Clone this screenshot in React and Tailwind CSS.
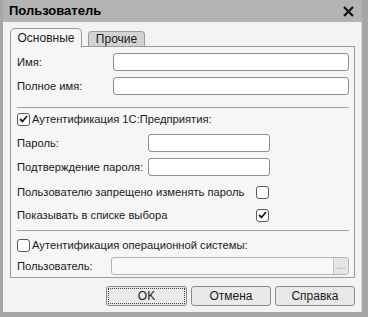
import React from "react";

const font = { fontFamily: '"Liberation Sans", Arial, sans-serif' };

function Box({ checked }) {
  return (
    <div className="w-[13px] h-[13px] rounded-[3px] border border-[#5a5a5a] bg-white flex items-center justify-center shrink-0">
      {checked && (
        <svg width="9" height="8" viewBox="0 0 9 8">
          <path d="M1 4 L3.5 6.5 L8 1" stroke="#1a1a1a" strokeWidth="1.8" fill="none" />
        </svg>
      )}
    </div>
  );
}

function Input({ w }) {
  return <div className={`h-[18px] rounded-[3px] border border-[#8e8e8e] bg-white shrink-0 ${w}`} />;
}

export default function App() {
  return (
    <div
      className="w-[368px] h-[317px] bg-[#a6a6a6] flex flex-col pl-[3px] pr-[6px] pb-[5px] text-[11.2px] text-[#1a1a1a] whitespace-nowrap"
      style={font}
    >
      <div className="h-[22px] shrink-0 flex items-center justify-between pl-[6px] pr-[8px] bg-[#b3b3b3]">
        <span className="font-bold text-[13px] text-black">Пользователь</span>
        <svg width="11" height="11" viewBox="0 0 11 11">
          <path d="M1 1 L10 10 M10 1 L1 10" stroke="#111" strokeWidth="2.2" />
        </svg>
      </div>
      <div className="flex-1 bg-[#f3f3f3] flex flex-col pl-[7px] pr-[6px] pt-[6px] border-r border-[#dcdcdc]">
        <div className="flex items-end h-[18px] gap-[6px]">
          <div className="w-[72px] h-[19px] -mb-px z-10 border border-[#9a9a9a] border-b-0 rounded-t-[5px] bg-[#f6f6f6] flex items-center justify-center text-[12px]">
            Основные
          </div>
          <div className="w-[57px] h-[15px] border border-[#9a9a9a] border-b-0 rounded-t-[4px] bg-[#d3d3d3] flex items-center justify-center text-[12px]">
            Прочие
          </div>
        </div>
        <div className="h-[232px] border border-[#9a9a9a] bg-[#f6f6f6] pl-[6px] pr-[5px] pt-[6px] flex flex-col">
          <div className="flex items-center h-[18px]">
            <span className="w-[96px] shrink-0">Имя:</span>
            <Input w="flex-1" />
          </div>
          <div className="flex items-center h-[18px] mt-[6px]">
            <span className="w-[96px] shrink-0">Полное имя:</span>
            <Input w="flex-1" />
          </div>
          <div className="h-px bg-[#a0a0a0] mt-[12px]" />
          <div className="flex items-center h-[14px] mt-[4px] gap-[2px]">
            <Box checked />
            <span>Аутентификация 1С:Предприятия:</span>
          </div>
          <div className="flex items-center h-[18px] mt-[8px]">
            <span className="w-[131px] shrink-0">Пароль:</span>
            <Input w="w-[122px]" />
          </div>
          <div className="flex items-center h-[18px] mt-[6px]">
            <span className="w-[131px] shrink-0">Подтверждение пароля:</span>
            <Input w="w-[122px]" />
          </div>
          <div className="flex items-center h-[14px] mt-[9px]">
            <span className="w-[239px] shrink-0">Пользователю запрещено изменять пароль</span>
            <Box />
          </div>
          <div className="flex items-center h-[14px] mt-[9px]">
            <span className="w-[239px] shrink-0">Показывать в списке выбора</span>
            <Box checked />
          </div>
          <div className="h-px bg-[#a0a0a0] mt-[8px]" />
          <div className="flex items-center h-[14px] mt-[7px] gap-[2px]">
            <Box />
            <span>Аутентификация операционной системы:</span>
          </div>
          <div className="flex items-center h-[18px] mt-[5px]">
            <span className="w-[94px] shrink-0">Пользователь:</span>
            <div className="flex-1 h-[18px] rounded-[3px] border border-[#b4b4b4] bg-[#f9f9f9] flex justify-end">
              <div className="w-[15px] h-full border-l border-[#c4c4c4] bg-[#e6e6e6] rounded-r-[3px] flex items-end justify-center pb-[3px] text-[10px] leading-none text-[#888]">
                ...
              </div>
            </div>
          </div>
        </div>
        <div className="flex justify-end gap-[4px] mt-[8px]">
          <button className="w-[81px] h-[20px] rounded-[3px] border border-[#8a8a8a] bg-[#e9e9e9] flex items-center justify-center p-[1px] text-[12px]">
            <span className="w-full h-full border border-dotted border-[#444] flex items-center justify-center">OK</span>
          </button>
          <button className="w-[80px] h-[20px] rounded-[3px] border border-[#8a8a8a] bg-[#e9e9e9] flex items-center justify-center text-[12px]">
            Отмена
          </button>
          <button className="w-[80px] h-[20px] rounded-[3px] border border-[#8a8a8a] bg-[#e9e9e9] flex items-center justify-center text-[12px]">
            Справка
          </button>
        </div>
      </div>
    </div>
  );
}
